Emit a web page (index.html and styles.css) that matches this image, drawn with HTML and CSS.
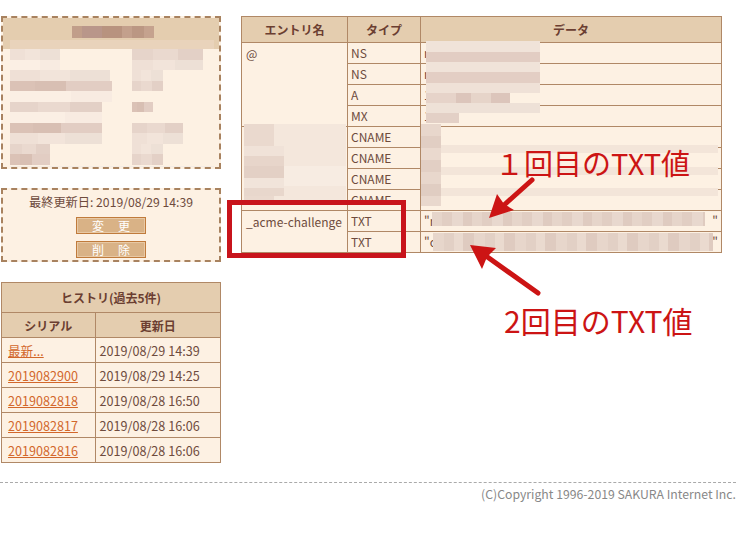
FILE: index.html
```html
<!DOCTYPE html>
<html lang="ja">
<head>
<meta charset="utf-8">
<title>DNS</title>
<link rel="stylesheet" href="styles.css">
</head>
<body>
<div class="page">
  <div class="content">
    <aside class="side">
      <div class="box info">
        <div class="info-head">
          <span class="title-mz"></span>
          <div class="info-band"></div>
        </div>
        <div class="mrow"><span class="mz w50 t1"></span><span class="mz w71 t2"></span></div>
        <div class="mrow"><span class="mz w50 t0"></span><span class="mz w71 t1"></span></div>
        <div class="mrow"><span class="mz w100 t1"></span><span class="mz w31 t1"></span></div>
        <div class="mrow"><span class="mz w102 t3"></span><span class="mz w31 t2"></span></div>
        <div class="mrow"><span class="mz w102 t0"></span><span></span></div>
        <div class="mrow"><span class="mz w92 t2"></span><span class="mz w21 t3"></span></div>
        <div class="mrow"><span class="mz w92 t0"></span><span></span></div>
        <div class="mrow"><span class="mz w92 t3"></span><span class="mz w51 t2"></span></div>
        <div class="mrow"><span class="mz w92 t1"></span><span class="mz w51 t1"></span></div>
        <div class="mrow"><span class="mz w40 t2"></span><span class="mz w31 t1"></span></div>
        <div class="mrow"><span class="mz w40 t3"></span><span class="mz w31 t2"></span></div>
        <div class="info-foot"></div>
      </div>

      <div class="box update">
        <p class="updated">最終更新日: 2019/08/29 14:39</p>
        <button class="btn" type="button">変　更</button>
        <button class="btn" type="button">削　除</button>
      </div>

      <table class="history">
        <colgroup><col class="hc1"><col class="hc2"></colgroup>
        <tr class="h-title"><th colspan="2">ヒストリ(過去5件)</th></tr>
        <tr class="h-cols"><th>シリアル</th><th>更新日</th></tr>
        <tr><td><a href="#">最新...</a></td><td class="date">2019/08/29 14:39</td></tr>
        <tr><td><a href="#">2019082900</a></td><td class="date">2019/08/29 14:25</td></tr>
        <tr><td><a href="#">2019082818</a></td><td class="date">2019/08/28 16:50</td></tr>
        <tr><td><a href="#">2019082817</a></td><td class="date">2019/08/28 16:06</td></tr>
        <tr><td><a href="#">2019082816</a></td><td class="date">2019/08/28 16:06</td></tr>
      </table>
    </aside>

    <main class="main">
      <table class="records">
        <colgroup><col class="c1"><col class="c2"><col class="c3"></colgroup>
        <tr class="head"><th>エントリ名</th><th>タイプ</th><th>データ</th></tr>
        <tr><td class="name" rowspan="4">@</td><td>NS</td><td class="data">n</td></tr>
        <tr><td>NS</td><td class="data">n</td></tr>
        <tr><td>A</td><td class="data">1</td></tr>
        <tr><td>MX</td><td class="data">1</td></tr>
        <tr><td class="name" rowspan="4"></td><td>CNAME</td><td class="data"></td></tr>
        <tr><td>CNAME</td><td class="data"></td></tr>
        <tr><td>CNAME</td><td class="data"></td></tr>
        <tr><td>CNAME</td><td class="data"></td></tr>
        <tr><td class="name" rowspan="2">_acme-challenge</td><td>TXT</td><td class="data quoted">"r<span class="endq">"</span></td></tr>
        <tr><td>TXT</td><td class="data quoted">"c<span class="endq">?"</span></td></tr>
      </table>
    </main>
  </div>

  <footer class="footer">(C)Copyright 1996-2019 SAKURA Internet Inc.</footer>

  <!-- mosaic overlays hiding private data -->
  <div class="mosaic m-ns"></div>
  <div class="mosaic m-cname-name"></div>
  <div class="mosaic m-cname-strip"></div>
  <div class="mosaic m-band b1"></div>
  <div class="mosaic m-band b2"></div>
  <div class="mosaic m-band b3"></div>
  <div class="mosaic m-txt1"></div>
  <div class="mosaic m-txt2"></div>

  <!-- annotations -->
  <svg class="annot" width="752" height="535" viewBox="0 0 752 535" aria-hidden="true">
    <rect x="229.5" y="202.5" width="174" height="53" fill="none" stroke="#c8141c" stroke-width="5"/>
    <line x1="532" y1="180" x2="503" y2="206" stroke="#cc1414" stroke-width="5" stroke-linecap="round"/>
    <polygon points="489,218 497,194 504,204 514,210" fill="#cc1414"/>
    <line x1="538" y1="293" x2="486" y2="256" stroke="#cc1414" stroke-width="5" stroke-linecap="round"/>
    <polygon points="470,245 496,248 487,257 482,269" fill="#cc1414"/>
  </svg>
  <div class="note n1">１回目のTXT値</div>
  <div class="note n2">2回目のTXT値</div>
</div>
</body>
</html>
```

FILE: styles.css
```css
html, body {
  margin: 0;
  padding: 0;
  background: #ffffff;
}
body {
  font-family: "Noto Sans CJK JP", "Noto Sans", sans-serif;
  font-size: 12px;
  color: #6e4b3d;
}
.page {
  position: relative;
  width: 752px;
  height: 535px;
}
.content {
  display: flex;
  gap: 20px;
  padding: 16px 0 0 1px;
  align-items: flex-start;
}

/* ---------- left column ---------- */
.side {
  width: 220px;
  display: flex;
  flex-direction: column;
}
.box {
  box-sizing: border-box;
  border: 2px dashed #a8825f;
  background: #fdf1e3;
}
.info {
  height: 153px;
  overflow: hidden;
}
.info-head {
  height: 31px;
  background: #e4cdaf;
  position: relative;
}
.title-mz {
  position: absolute;
  left: 69px;
  top: 8px;
  width: 82px;
  height: 12px;
  background: linear-gradient(90deg, #c19e8a 0 10px, #b9968a 10px 30px, #b8937f 30px 50px, #c3a08c 50px 60px, #bb9783 60px 72px, #c5a28e 72px 82px);
}
.info-band {
  position: absolute;
  left: 7px;
  right: 5px;
  bottom: 0;
  height: 9px;
  background: #e9d3bb;
}
.mrow {
  display: grid;
  grid-template-columns: 122px 1fr;
  height: 10.5px;
  padding-left: 7px;
}
.mz { display: block; height: 100%; }
.w21 { width: 21px; } .w31 { width: 31px; } .w40 { width: 40px; }
.w50 { width: 50px; } .w51 { width: 51px; } .w71 { width: 71px; }
.w92 { width: 92px; } .w100 { width: 100px; } .w102 { width: 102px; }
.t0 { background: linear-gradient(90deg, #fbefe4 0 60%, #f8ebe1 60%); }
.t1 { background: linear-gradient(90deg, #efe0d6 0 30%, #f2e4da 30% 60%, #ede0d6 60%); }
.t2 { background: linear-gradient(90deg, #e6d4ca 0 30%, #ead9cf 30% 65%, #e3d0c6 65%); }
.t3 { background: linear-gradient(90deg, #dbc2b6 0 25%, #d8bfb3 25% 55%, #e2cdc3 55%); }
.info-foot {
  height: 6px;
  margin: 1px 5px 0 7px;
  background: #f4ece4;
}

.update {
  margin-top: 19px;
  height: 74px;
  display: flex;
  flex-direction: column;
  align-items: center;
}
.updated {
  margin: 4px 0 0;
  line-height: 17px;
  font-size: 12.2px;
  color: #6e4b3d;
}
.btn {
  box-sizing: border-box;
  width: 70px;
  height: 17px;
  margin-top: 6px;
  padding: 0;
  border: 1px solid #c07b3c;
  box-shadow: inset 0 0 0 1px #e8c9a5;
  background: #d9b286;
  color: #ffffff;
  font-family: "Noto Sans CJK JP", sans-serif;
  font-size: 12px;
  line-height: 14px;
  letter-spacing: 1px;
  text-indent: 1px;
}
.btn + .btn { margin-top: 7px; }

.history {
  margin-top: 20px;
  width: 220px;
  border-collapse: collapse;
  background: #fdf1e3;
}
.hc1 { width: 94px; }
.hc2 { width: 126px; }
.history th, .history td {
  border: 1px solid #b08866;
  padding: 0 0 0 6px;
  height: 24px;
  font-size: 12.6px;
  white-space: nowrap;
}
.history td.date { padding-left: 4px; }
.history th {
  background: #e4cdaf;
  color: #6b3e31;
  font-weight: bold;
  text-align: center;
  padding: 0;
  font-size: 12px;
}
.h-title th { height: 29px; }
.history td { color: #6e4b3d; }
.history a {
  color: #d2672b;
  text-decoration: underline;
}

/* ---------- records table ---------- */
.main { width: 480px; }
.records {
  width: 480px;
  border-collapse: collapse;
  background: #fdf1e3;
  table-layout: fixed;
}
.c1 { width: 106px; }
.c2 { width: 73px; }
.c3 { width: 301px; }
.records th, .records td {
  border: 1px solid #b08866;
  padding: 0 0 0 3px;
  height: 20px;
  line-height: 20px;
  font-size: 12px;
  text-align: left;
  white-space: nowrap;
  overflow: hidden;
}
.records th {
  height: 25px;
  background: #e4cdaf;
  color: #6b3e31;
  font-weight: bold;
  text-align: center;
  padding: 0;
}
.records td.name {
  vertical-align: top;
  padding-left: 4px;
  padding-top: 1px;
}
.records td.data { padding-left: 3px; }
.quoted { position: relative; }
.endq {
  position: absolute;
  right: 3px;
  top: 0;
}

/* ---------- mosaic overlays ---------- */
.mosaic { position: absolute; }
.m-ns {
  left: 426px;
  top: 41px;
  width: 114px;
  height: 82px;
  background:
    linear-gradient(180deg,
      #f0e3d9 0 11px,
      #e2cdc3 11px 21px,
      #f0e3d9 21px 31px,
      #e3cec4 31px 42px,
      #efe1d7 42px 52px,
      transparent 52px);
}
.m-ns::before {
  content: "";
  position: absolute;
  left: 0; top: 52px;
  width: 84px; height: 10px;
  background: linear-gradient(90deg, #e6d3c9 0 30px, #dcc5bb 30px 45px, #e6d4c9 45px 65px, #dcc5bb 65px 84px);
}
.m-ns::after {
  content: "";
  position: absolute;
  left: 0; top: 62px;
  width: 114px; height: 20px;
  background: linear-gradient(180deg, #eee1d7 0 10px, transparent 10px),
              linear-gradient(90deg, #e3d0c6 0 33px, transparent 33px);
}
.m-cname-name {
  left: 244px;
  top: 124px;
  width: 102px;
  height: 80px;
  background:
    linear-gradient(90deg, #ead9ce 0 30px, #f4e7dc 30px 102px);
}
.m-cname-name::before {
  content: "";
  position: absolute;
  left: 0; top: 22px;
  width: 40px; height: 50px;
  background: linear-gradient(180deg, #f0e2d8 0 10px, #e7d5ca 10px 20px, #e3d0c5 20px 32px, #f1e4da 32px 42px, #e8d7cc 42px 50px);
}
.m-cname-name::after {
  content: "";
  position: absolute;
  left: 40px; top: 42px;
  width: 62px; height: 20px;
  background: #f7ece2;
}
.m-cname-strip {
  left: 421px;
  top: 124px;
  width: 20px;
  height: 82px;
  background: linear-gradient(180deg, #e8d7cc 0 12px, #e1cec3 12px 24px, #ead9ce 24px 36px, #e2cfc4 36px 48px, #e8d7cc 48px 60px, #e0cdc2 60px 72px, #e9d8cd 72px 82px);
}
.m-band {
  left: 441px;
  width: 277px;
  height: 8px;
  background: #f3e5d9;
}
.b1 { top: 145px; }
.b2 { top: 167px; }
.b3 { top: 188px; }
.m-txt1 {
  left: 432px;
  top: 212px;
  width: 273px;
  height: 14px;
  background: repeating-linear-gradient(90deg, #e6d5ca 0 10px, #e1cec3 10px 20px, #e8d8ce 20px 31px, #dfcbc0 31px 40px);
}
.m-txt2 {
  left: 433px;
  top: 233px;
  width: 280px;
  height: 18px;
  background: repeating-linear-gradient(90deg, #e7d6cb 0 11px, #e2d0c5 11px 21px, #eadacf 21px 30px, #dfcbc0 30px 41px);
}

/* ---------- footer ---------- */
.footer {
  box-sizing: border-box;
  width: 736px;
  margin-top: 19px;
  border-top: 1px dashed #aaaaaa;
  padding-top: 3px;
  text-align: right;
  font-family: "Noto Sans CJK JP", sans-serif;
  font-size: 12.25px;
  line-height: 16px;
  color: #888888;
}

/* ---------- annotations ---------- */
.annot {
  position: absolute;
  left: 0;
  top: 0;
  pointer-events: none;
}
.note {
  position: absolute;
  font-family: "Noto Sans CJK JP", sans-serif;
  line-height: 30px;
  color: #cc1414;
  white-space: nowrap;
}
.n1 { left: 495px; top: 147px; font-size: 29px; }
.n2 { left: 504px; top: 305px; font-size: 30px; }
```
